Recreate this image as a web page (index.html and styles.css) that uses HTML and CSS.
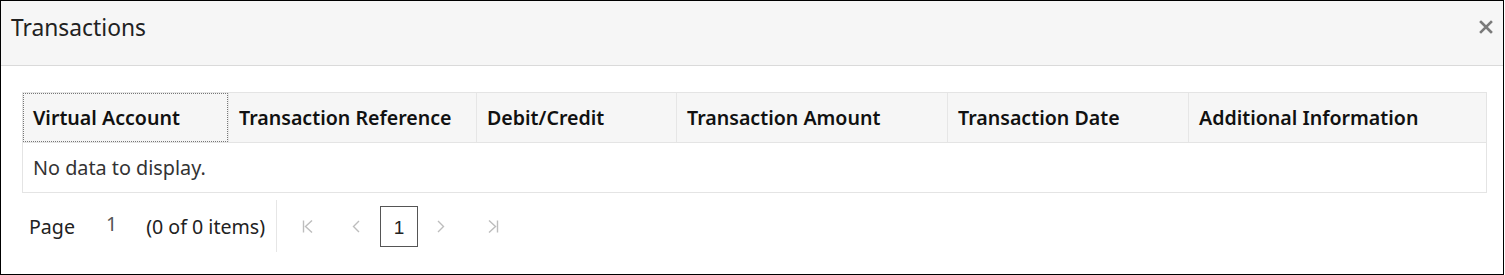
FILE: index.html
```html
<!DOCTYPE html>
<html lang="en">
<head>
    <meta charset="UTF-8">
    <title>Transactions</title>
    <link rel="stylesheet" href="styles.css">
</head>
<body>
    <div class="dialog">
        <div class="dialog-header">
            <span class="dialog-title">Transactions</span>
            <button class="close-btn" aria-label="Close">
                <svg width="14" height="14" viewBox="0 0 14 14">
                    <path d="M2 2 L12 12 M12 2 L2 12" stroke="#7a7a7a" stroke-width="2.6" stroke-linecap="square"/>
                </svg>
            </button>
        </div>
        <div class="dialog-body">
            <div class="grid">
                <div class="grid-row grid-head">
                    <div class="cell col-1 focused">Virtual Account</div>
                    <div class="cell col-2">Transaction Reference</div>
                    <div class="cell col-3">Debit/Credit</div>
                    <div class="cell col-4">Transaction Amount</div>
                    <div class="cell col-5">Transaction Date</div>
                    <div class="cell col-6">Additional Information</div>
                </div>
                <div class="grid-row grid-empty">No data to display.</div>
            </div>
            <div class="pager">
                <div class="pager-info">
                    <span>Page</span>
                    <span class="page-num">1</span>
                    <span>(0 of 0 items)</span>
                </div>
                <div class="pager-nav">
                    <span class="nav-btn nav-first">
                        <svg width="12" height="13" viewBox="0 0 12 13"><path d="M1.5 0.5 V12.5 M10 0.5 L3.5 6.5 L10 12.5" fill="none" stroke="#bdbdbd" stroke-width="1.4"/></svg>
                    </span>
                    <span class="nav-btn nav-prev">
                        <svg width="8" height="13" viewBox="0 0 8 13"><path d="M7 1 L1.5 6.5 L7 12" fill="none" stroke="#bdbdbd" stroke-width="1.4"/></svg>
                    </span>
                    <span class="page-box">1</span>
                    <span class="nav-btn nav-next">
                        <svg width="8" height="13" viewBox="0 0 8 13"><path d="M1 1 L6.5 6.5 L1 12" fill="none" stroke="#bdbdbd" stroke-width="1.4"/></svg>
                    </span>
                    <span class="nav-btn nav-last">
                        <svg width="12" height="13" viewBox="0 0 12 13"><path d="M10.5 0.5 V12.5 M2 0.5 L8.5 6.5 L2 12.5" fill="none" stroke="#bdbdbd" stroke-width="1.4"/></svg>
                    </span>
                </div>
            </div>
        </div>
    </div>
</body>
</html>
```

FILE: styles.css
```css
body {
    margin: 0;
    font-family: "Noto Sans", "Open Sans", sans-serif;
    color: #222;
    background: #fff;
}
.dialog {
    width: 1504px;
    height: 275px;
    box-sizing: border-box;
    border: 1px solid #000;
}
.dialog-header {
    height: 64px;
    display: flex;
    align-items: center;
    justify-content: space-between;
    padding: 0 10px 0 10px;
    background-color: #f6f6f6;
    border-bottom: 1px solid #dadada;
}
.dialog-title {
    font-size: 22.8px;
    color: #222;
    margin-top: -12px;
}
.close-btn {
    border: none;
    background: none;
    padding: 0;
    margin-top: -12px;
    display: flex;
}
.dialog-body {
    padding: 26px 16px 0 21px;
}
.grid {
    border: 1px solid #e4e4e4;
}
.grid-head {
    display: flex;
    background-color: #f6f6f6;
    height: 49px;
    border-bottom: 1px solid #e4e4e4;
    font-weight: 600;
    font-size: 19.6px;
    color: #111;
}
.cell {
    box-sizing: border-box;
    display: flex;
    align-items: center;
    padding-left: 10px;
    border-left: 1px solid #e6e6e6;
}
.cell.col-1 { width: 205px; border-left: none; }
.cell.col-2 { width: 248px; }
.cell.col-3 { width: 200px; }
.cell.col-4 { width: 271px; }
.cell.col-5 { width: 241px; }
.cell.col-6 { flex: 1; }
.cell.focused {
    outline: 1px dotted #777;
    outline-offset: -1px;
}
.grid-empty {
    height: 49px;
    display: flex;
    align-items: center;
    padding-left: 10px;
    font-size: 19.8px;
    color: #333;
}
.pager {
    display: flex;
    align-items: center;
    height: 60px;
    padding-top: 6px;
    box-sizing: border-box;
}
.pager-info {
    display: flex;
    align-items: center;
    font-size: 19.6px;
    color: #222;
    padding-left: 7px;
    padding-right: 11px;
    height: 52px;
    border-right: 1px solid #e6e6e6;
}
.page-num {
    color: #555;
    margin: -5px 29px 0 31px;
}
.pager-nav {
    display: flex;
    align-items: center;
    padding-left: 25px;
}
.nav-btn {
    display: flex;
    align-items: center;
}
.nav-prev { margin-left: 38px; }
.page-box { margin-left: 20px; }
.nav-next { margin-left: 19px; }
.nav-last { margin-left: 42px; }
.page-box {
    width: 36px;
    height: 35px;
    border: 1px solid #555;
    display: flex;
    align-items: center;
    justify-content: center;
    font-size: 19px;
    font-family: "Liberation Sans", sans-serif;
    color: #222;
    padding-top: 4px;
    box-sizing: content-box;
}
```
